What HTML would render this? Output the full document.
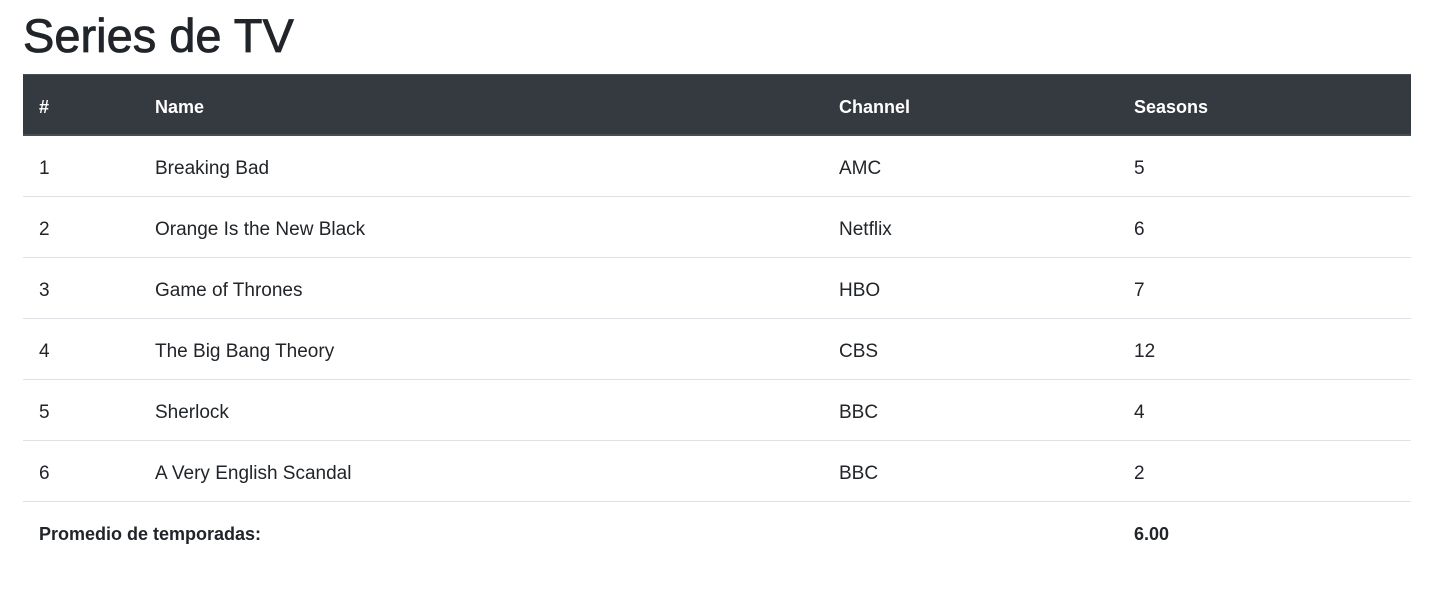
<!DOCTYPE html>
<html><head><meta charset="utf-8"><style>
body{margin:0;background:#fff;font-family:"Liberation Sans",Arial,sans-serif;color:#212529;font-size:19px;}
.c{position:absolute;left:23px;top:0;width:1388px;}
h1{margin:4px 0 10px;height:60px;line-height:64px;font-size:47px;font-weight:500;-webkit-text-stroke:0.8px #212529;color:#212529;}
table{border-collapse:collapse;width:1388px;table-layout:fixed;}
th,td{padding:5px 15px 0 16px;height:55px;text-align:left;vertical-align:middle;border-top:1px solid #dee2e6;line-height:24px;}
thead th{background:#343a40;color:#fff;border-color:#454d55;border-bottom:2px solid #454d55;height:55px;font-weight:bold;font-size:18px;padding-top:4px;}
tfoot td{font-weight:bold;font-size:18px;padding-top:4px;height:56px;}
</style></head><body><div class="c">
<h1>Series de TV</h1>
<table>
<colgroup><col style="width:116px"><col style="width:684px"><col style="width:295px"><col style="width:293px"></colgroup>
<thead><tr><th>#</th><th>Name</th><th>Channel</th><th>Seasons</th></tr></thead>
<tbody>
<tr><td>1</td><td>Breaking Bad</td><td>AMC</td><td>5</td></tr>
<tr><td>2</td><td>Orange Is the New Black</td><td>Netflix</td><td>6</td></tr>
<tr><td>3</td><td>Game of Thrones</td><td>HBO</td><td>7</td></tr>
<tr><td>4</td><td>The Big Bang Theory</td><td>CBS</td><td>12</td></tr>
<tr><td>5</td><td>Sherlock</td><td>BBC</td><td>4</td></tr>
<tr><td>6</td><td>A Very English Scandal</td><td>BBC</td><td>2</td></tr>
</tbody>
<tfoot><tr><td colspan="3">Promedio de temporadas:</td><td>6.00</td></tr></tfoot>
</table></div></body></html>
